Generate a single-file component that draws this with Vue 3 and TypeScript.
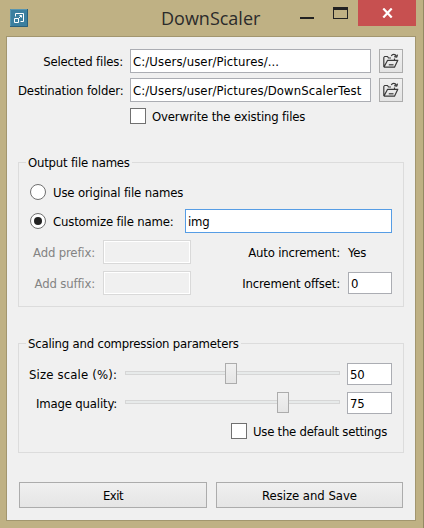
<script setup lang="ts">
import { ref } from 'vue'

const selectedFiles = ref('C:/Users/user/Pictures/...')
const destination = ref('C:/Users/user/Pictures/DownScalerTest')
const customName = ref('img')
const offset = ref(0)
const naming = ref<'original' | 'custom'>('custom')
const overwrite = ref(false)
const useDefaults = ref(false)

interface Slider {
  id: string
  label: string
  value: number
}

const sliders = ref<Slider[]>([
  { id: 'scale', label: 'Size scale (%):', value: 50 },
  { id: 'quality', label: 'Image quality:', value: 75 },
])

const TRACK = 215
const THUMB = 12
const thumbLeft = (v: number): string => `${Math.round(((v - 1) / 99) * (TRACK - THUMB))}px`
</script>

<template>
  <div class="window">
    <header class="titlebar">
      <svg class="app-icon" width="18" height="18" viewBox="0 0 18 18">
        <rect width="18" height="18" fill="#3b7f9f" />
        <path d="M0 17.5H17.5V0" fill="none" stroke="#2a607c" />
        <path d="M0.5 17V0.5H17" fill="none" stroke="#5795b0" />
        <path d="M5.5 7.5V4.5H13.5V12.5H10.5M4.500 9.500H8.500V13.500H4.500ZM8.500 9.500L11.500 6.500M9.500 6.500H11.500V8.500" fill="none" stroke="#fff" />
      </svg>
      <h1 class="title">DownScaler</h1>
      <div class="controls">
        <span class="minimize"></span>
        <span class="maximize"></span>
        <span class="close">
          <svg width="11" height="10" viewBox="0 0 11 10">
            <path d="M1.300 0.500L9.700 9.500M9.700 0.500L1.300 9.500" stroke="#fff" stroke-width="2.200" />
          </svg>
        </span>
      </div>
    </header>

    <main class="client">
      <section class="paths">
        <div v-for="(path, i) in [selectedFiles, destination]" :key="i" class="path-row">
          <span class="label text">{{ i ? 'Destination folder:' : 'Selected files:' }}</span>
          <span class="field path">{{ path }}</span>
          <button class="browse" type="button">
            <svg width="18" height="16" viewBox="0 0 18 16" fill="none" stroke="#3a3a3a" stroke-width="1.200" stroke-linejoin="round">
              <path d="M1.800 14V4.500L2.600 3.500H5.500L6.500 5H9M1.800 14.200H12.500L15.800 7.300H5.600L2 14M12.500 7V5.500" />
              <path d="M6.800 11.800H11.500" />
              <path d="M9.300 3C10.300 0.900 13.300 0.700 14.300 3.300M15.500 1.600L14.800 4.200L12.200 3.600" />
            </svg>
          </button>
        </div>
        <label class="check-row overwrite" @click="overwrite = !overwrite">
          <span class="checkbox"></span><span class="text">Overwrite the existing files</span>
        </label>
      </section>

      <section class="group names">
        <h2 class="legend">Output file names</h2>
        <div class="radio-row" @click="naming = 'original'">
          <span class="radio" :class="{ on: naming === 'original' }"></span><span class="text">Use original file names</span>
        </div>
        <div class="radio-row" @click="naming = 'custom'">
          <span class="radio" :class="{ on: naming === 'custom' }"></span><span class="text custom">Customize file name:</span>
          <span class="field focused">{{ customName }}</span>
        </div>
        <div class="affix-row">
          <span class="label text muted">Add prefix:</span><span class="field disabled"></span>
          <span class="label text right">Auto increment:</span><span class="text">Yes</span>
        </div>
        <div class="affix-row">
          <span class="label text muted">Add suffix:</span><span class="field disabled"></span>
          <span class="label text right">Increment offset:</span><span class="field number offset">{{ offset }}</span>
        </div>
      </section>

      <section class="group scaling">
        <h2 class="legend">Scaling and compression parameters</h2>
        <div v-for="s in sliders" :key="s.id" class="slider-row">
          <span class="label text" :class="s.id">{{ s.label }}</span>
          <div class="slider">
            <div class="track"></div>
            <div class="thumb" :style="{ left: thumbLeft(s.value) }"></div>
          </div>
          <span class="field number">{{ s.value }}</span>
        </div>
        <label class="check-row defaults" @click="useDefaults = !useDefaults">
          <span class="checkbox"></span><span class="text">Use the default settings</span>
        </label>
      </section>

      <footer class="actions">
        <button class="btn exit" type="button">Exit</button>
        <button class="btn save" type="button">Resize and Save</button>
      </footer>
    </main>
  </div>
</template>

<style>
body {
  margin: 0;
  overflow: hidden;
}
</style>

<style scoped>
* {
  box-sizing: border-box;
}
.window {
  width: 424px;
  height: 528px;
  padding: 0 7px 7px 6px;
  background: #bfb184;
  border-right: 1px solid #938964;
  font: 13px/17px 'DejaVu Sans Condensed', 'DejaVu Sans', sans-serif;
  font-stretch: condensed;
  letter-spacing: -0.16px;
  color: #000;
  white-space: nowrap;
}
.text {
  flex: none;
  padding-top: 1px;
}
.titlebar {
  display: flex;
  height: 36px;
  padding-left: 4px;
}
.app-icon {
  margin-top: 9px;
}
.title {
  width: 100px;
  margin: 6px 0 0 133px;
  font: 400 18px/24px 'Open Sans', sans-serif;
  letter-spacing: 0;
  color: #2b2b2b;
}
.controls {
  display: flex;
  align-items: flex-start;
  margin-left: 39px;
}
.minimize {
  width: 14px;
  height: 2px;
  margin-top: 17px;
  background: #222;
}
.maximize {
  width: 15px;
  height: 12px;
  margin: 7px 10px 0 19px;
  border: 1px solid #222;
  border-top-width: 3px;
}
.close {
  display: flex;
  align-items: center;
  justify-content: center;
  width: 58px;
  height: 26px;
  background: #c75050;
}
.client {
  width: 410px;
  height: 485px;
  padding: 12px 11px 12px 11px;
  border: 1px solid #a2966f;
  background: #f0f0f0;
}
.paths {
  display: flex;
  flex-direction: column;
  gap: 5px;
}
.path-row {
  display: flex;
  align-items: center;
  height: 24px;
}
.label {
  text-align: right;
}
.path-row .label {
  width: 105px;
  margin-right: 7px;
}
.field {
  display: flex;
  align-items: center;
  height: 24px;
  padding: 1px 0 0 2px;
  border: 1px solid #abadb3;
  background: #fff;
}
.path {
  width: 241px;
  letter-spacing: 0.1px;
}
.browse {
  display: flex;
  align-items: center;
  justify-content: center;
  width: 24px;
  height: 24px;
  margin-left: 8px;
  padding: 0;
  border: 1px solid #acacac;
  background: linear-gradient(#f0f0f0, #e4e4e4);
}
.check-row {
  display: flex;
  align-items: center;
  gap: 6px;
  height: 16px;
}
.overwrite {
  margin: 1px 0 0 112px;
}
.checkbox {
  flex: none;
  width: 16px;
  height: 16px;
  border: 1px solid #707070;
  background: #fff;
}
.group {
  width: 386px;
  border: 1px solid #dcdcdc;
  padding-right: 11px;
}
.names {
  height: 145px;
  margin-top: 38px;
}
.legend {
  width: fit-content;
  height: 16px;
  margin: -9px 0 0 7px;
  padding: 0 2px;
  background: #f0f0f0;
  font: inherit;
  letter-spacing: -0.2px;
}
.radio-row {
  display: flex;
  align-items: center;
  height: 24px;
  margin-left: 11px;
}
.legend + .radio-row {
  margin-top: 10px;
  margin-bottom: 5px;
}
.radio {
  display: flex;
  align-items: center;
  justify-content: center;
  width: 16px;
  height: 16px;
  margin-right: 7px;
  border: 1px solid #707070;
  border-radius: 50%;
  background: #fff;
}
.radio.on::after {
  content: '';
  width: 8px;
  height: 8px;
  border-radius: 50%;
  background: #222;
}
.custom {
  width: 132px;
}
.focused {
  width: 207px;
  border-color: #569de5;
}
.affix-row {
  display: flex;
  align-items: center;
  height: 24px;
  margin-top: 7px;
}
.affix-row .muted {
  width: 76px;
  margin-right: 8px;
  color: #838383;
}
.disabled {
  width: 88px;
  border-color: #d9d9d9;
  background: #f0f0f0;
  box-shadow: inset 0 0 0 1px #fff;
}
.affix-row .right {
  width: 149px;
  margin-right: 8px;
}
.number {
  width: 45px;
  height: 22px;
}
.offset {
  width: 44px;
}
.scaling {
  height: 110px;
  margin-top: 36px;
}
.slider-row {
  display: flex;
  align-items: center;
  height: 22px;
  margin-top: 7px;
}
.legend + .slider-row {
  margin-top: 12px;
}
.slider-row .label {
  width: 98px;
  margin-right: 8px;
}
.scale {
  letter-spacing: 0.15px;
}
.slider {
  position: relative;
  width: 215px;
  height: 22px;
  margin-right: 7px;
}
.track {
  height: 4px;
  margin-top: 8px;
  border: 1px solid #d6d6d6;
  background: #e7eaea;
}
.thumb {
  position: absolute;
  top: 0;
  width: 12px;
  height: 21px;
  border: 1px solid #acacac;
  background: linear-gradient(#f0f0f0, #e5e5e5);
}
.defaults {
  margin: 9px 0 0 212px;
  letter-spacing: -0.25px;
}
.actions {
  display: flex;
  gap: 9px;
  margin: 29px 0 0 1px;
}
.btn {
  height: 26px;
  padding: 1px 0 0;
  border: 1px solid #acacac;
  background: linear-gradient(#f0f0f0, #e5e5e5);
  font: inherit;
  color: #000;
}
.exit {
  width: 188px;
  letter-spacing: -0.5px;
}
.save {
  width: 187px;
  letter-spacing: -0.05px;
}
</style>
